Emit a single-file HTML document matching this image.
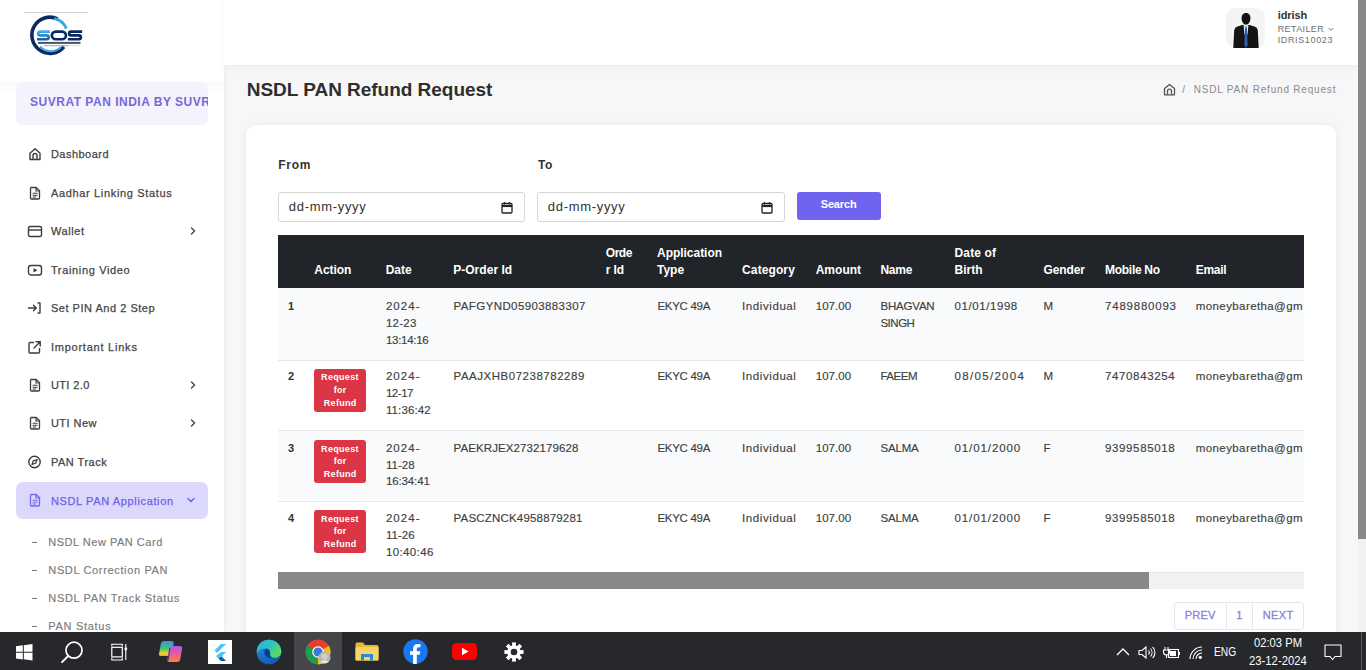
<!DOCTYPE html>
<html><head><meta charset="utf-8">
<style>
*{box-sizing:border-box;margin:0;padding:0}
html,body{width:1366px;height:670px;overflow:hidden;background:#f7f7f7;font-family:"Liberation Sans",sans-serif;position:relative}
.abs{position:absolute}
.t{position:absolute;white-space:nowrap}
svg{overflow:visible}
</style></head><body>
<div class="abs" style="left:224px;top:65px;width:1134px;height:567px;background:#f7f7f7"></div>
<div class="abs" style="left:0px;top:0px;width:224px;height:632px;background:#fff;box-shadow:1px 0 5px rgba(0,0,0,0.05)"></div>
<div class="abs" style="left:224px;top:0px;width:1134px;height:65px;background:#fff;box-shadow:0 2px 8px rgba(0,0,0,0.05)"></div>
<div class="abs" style="left:1358px;top:0px;width:8px;height:632px;background:#f1f1f1"></div>
<div class="abs" style="left:1358px;top:0px;width:8px;height:539px;background:#888"></div>
<div class="abs" style="left:24px;top:12px;width:64px;height:1px;background:#d0d0d0"></div>
<svg class="abs" style="left:0px;top:0px;" width="100" height="65" viewBox="0 0 100 65">
<defs><linearGradient id="sg" x1="0" y1="0" x2="0" y2="1"><stop offset="0" stop-color="#45b0ea"/><stop offset="1" stop-color="#1b5fa8"/></linearGradient></defs>
<path d="M57.6 18.8 A18.1 18.1 0 1 0 63.9 46.8" fill="none" stroke="#0c2a62" stroke-width="3.6"/>
<path d="M54 18.4 A17 17 0 0 1 66.3 28.6" fill="none" stroke="#36a4e2" stroke-width="2.8"/>
<path d="M40 46.5 A15 15 0 0 0 61 47.3" fill="none" stroke="#3fa9e4" stroke-width="2"/>
<path d="M50.00 31.55H40.27A1.92 1.92 0 0 0 40.27 35.40H46.73A1.92 1.92 0 0 1 46.73 39.25H37.00" fill="none" stroke="url(#sg)" stroke-width="2.7"/>
<rect x="51.85" y="31.55" width="14.1" height="7.7" rx="3.85" fill="none" stroke="#0c2a62" stroke-width="2.7"/>
<path d="M82.20 31.55H71.07A1.92 1.92 0 0 0 71.07 35.40H78.93A1.92 1.92 0 0 1 78.93 39.25H67.80" fill="none" stroke="#0c2a62" stroke-width="2.7"/>
<rect x="38" y="41.9" width="42.5" height="2" fill="#1e2b40" opacity="0.8"/>
<rect x="44" y="45" width="24" height="1.3" fill="#6d8fb0" opacity="0.6"/>
<rect x="68" y="45.3" width="12" height="0.7" fill="#9ab" opacity="0.5"/>
</svg>
<div class="abs" style="left:0px;top:81px;width:224px;height:16px;background:linear-gradient(rgba(0,0,0,0.025),rgba(0,0,0,0))"></div>
<div class="abs" style="left:16px;top:82px;width:192px;height:43px;background:#f4f3fd;border-radius:7px"></div>
<div class="abs" style="left:16px;top:82px;width:192px;height:43px;overflow:hidden;border-radius:6px">
<div class="t" style="left:14.00px;top:14.00px;font-size:12px;line-height:13.404px;color:#7369d8;font-weight:bold;letter-spacing:0.510px;">SUVRAT PAN INDIA BY SUVRAT DIGITAL</div>
</div>
<div class="t" style="left:50.90px;top:148.00px;font-size:11px;line-height:12.287px;color:#454545;letter-spacing:0.475px;-webkit-text-stroke:0.25px #454545;">Dashboard</div>
<svg class="abs" style="left:28px;top:147.2px;" width="14" height="14" viewBox="0 0 14 14"><path d="M2 12.5V6.2L7 1.8l5 4.4v6.3z" fill="none" stroke="#3d3d3d" stroke-width="1.4" stroke-linejoin="round"/><path d="M5 12.5V8.5a2 2 0 0 1 4 0v4" fill="none" stroke="#3d3d3d" stroke-width="1.4"/></svg>
<div class="t" style="left:50.90px;top:187.00px;font-size:11px;line-height:12.287px;color:#454545;letter-spacing:0.665px;-webkit-text-stroke:0.25px #454545;">Aadhar Linking Status</div>
<svg class="abs" style="left:28px;top:185.66px;" width="14" height="14" viewBox="0 0 14 14"><path d="M3 1.5h5.2l3.3 3.3v7.2a1 1 0 0 1-1 1H3.5a1 1 0 0 1-1-1V2.5a1 1 0 0 1 1-1z" fill="none" stroke="#3d3d3d" stroke-width="1.3" stroke-linejoin="round"/><path d="M8 1.5v3.5h3.5" fill="none" stroke="#3d3d3d" stroke-width="1.2"/><path d="M4.6 7.3h5M4.6 9.2h5M4.6 11h3.5" stroke="#3d3d3d" stroke-width="1.1"/></svg>
<div class="t" style="left:50.90px;top:225.00px;font-size:11px;line-height:12.287px;color:#454545;letter-spacing:0.620px;-webkit-text-stroke:0.25px #454545;">Wallet</div>
<svg class="abs" style="left:27px;top:224.12px;" width="16" height="14" viewBox="0 0 16 14"><rect x="1.5" y="2.5" width="13" height="10" rx="1.5" fill="none" stroke="#3d3d3d" stroke-width="1.4"/><path d="M1.5 6h13" stroke="#3d3d3d" stroke-width="1.4"/></svg>
<svg class="abs" style="left:188px;top:226.12px;" width="10" height="10" viewBox="0 0 10 10"><path d="M3.5 2l3 3-3 3" fill="none" stroke="#444" stroke-width="1.4" stroke-linecap="round"/></svg>
<div class="t" style="left:50.90px;top:264.00px;font-size:11px;line-height:12.287px;color:#454545;letter-spacing:0.654px;-webkit-text-stroke:0.25px #454545;">Training Video</div>
<svg class="abs" style="left:27px;top:262.58px;" width="16" height="14" viewBox="0 0 16 14"><rect x="1.5" y="2.5" width="13" height="9.5" rx="2.5" fill="none" stroke="#3d3d3d" stroke-width="1.4"/><path d="M6.5 5v4.5l4-2.25z" fill="#3d3d3d"/></svg>
<div class="t" style="left:50.90px;top:302.00px;font-size:11px;line-height:12.287px;color:#454545;letter-spacing:0.524px;-webkit-text-stroke:0.25px #454545;">Set PIN And 2 Step</div>
<svg class="abs" style="left:27px;top:301.03999999999996px;" width="16" height="14" viewBox="0 0 16 14"><path d="M1.5 7h7.5M6.5 4.2L9.3 7 6.5 9.8" fill="none" stroke="#3d3d3d" stroke-width="1.4" stroke-linecap="round" stroke-linejoin="round"/><path d="M10.5 2h2.5v10h-2.5" fill="none" stroke="#3d3d3d" stroke-width="1.4" stroke-linejoin="round"/></svg>
<div class="t" style="left:50.90px;top:341.00px;font-size:11px;line-height:12.287px;color:#454545;letter-spacing:0.771px;-webkit-text-stroke:0.25px #454545;">Important Links</div>
<svg class="abs" style="left:27px;top:339.5px;" width="16" height="14" viewBox="0 0 16 14"><path d="M7 2.5H3a1 1 0 0 0-1 1v8.5a1 1 0 0 0 1 1h8.5a1 1 0 0 0 1-1V8" fill="none" stroke="#3d3d3d" stroke-width="1.4"/><path d="M7 8l6-6M9 1.8h4.2V6" fill="none" stroke="#3d3d3d" stroke-width="1.4" stroke-linecap="round"/></svg>
<div class="t" style="left:50.90px;top:379.00px;font-size:11px;line-height:12.287px;color:#454545;letter-spacing:0.400px;-webkit-text-stroke:0.25px #454545;">UTI 2.0</div>
<svg class="abs" style="left:28px;top:377.96px;" width="14" height="14" viewBox="0 0 14 14"><path d="M3 1.5h5.2l3.3 3.3v7.2a1 1 0 0 1-1 1H3.5a1 1 0 0 1-1-1V2.5a1 1 0 0 1 1-1z" fill="none" stroke="#3d3d3d" stroke-width="1.3" stroke-linejoin="round"/><path d="M8 1.5v3.5h3.5" fill="none" stroke="#3d3d3d" stroke-width="1.2"/><path d="M4.6 7.3h5M4.6 9.2h5M4.6 11h3.5" stroke="#3d3d3d" stroke-width="1.1"/></svg>
<svg class="abs" style="left:188px;top:379.96px;" width="10" height="10" viewBox="0 0 10 10"><path d="M3.5 2l3 3-3 3" fill="none" stroke="#444" stroke-width="1.4" stroke-linecap="round"/></svg>
<div class="t" style="left:50.90px;top:417.00px;font-size:11px;line-height:12.287px;color:#454545;letter-spacing:0.467px;-webkit-text-stroke:0.25px #454545;">UTI New</div>
<svg class="abs" style="left:28px;top:416.42px;" width="14" height="14" viewBox="0 0 14 14"><path d="M3 1.5h5.2l3.3 3.3v7.2a1 1 0 0 1-1 1H3.5a1 1 0 0 1-1-1V2.5a1 1 0 0 1 1-1z" fill="none" stroke="#3d3d3d" stroke-width="1.3" stroke-linejoin="round"/><path d="M8 1.5v3.5h3.5" fill="none" stroke="#3d3d3d" stroke-width="1.2"/><path d="M4.6 7.3h5M4.6 9.2h5M4.6 11h3.5" stroke="#3d3d3d" stroke-width="1.1"/></svg>
<svg class="abs" style="left:188px;top:418.42px;" width="10" height="10" viewBox="0 0 10 10"><path d="M3.5 2l3 3-3 3" fill="none" stroke="#444" stroke-width="1.4" stroke-linecap="round"/></svg>
<div class="t" style="left:50.90px;top:456.00px;font-size:11px;line-height:12.287px;color:#454545;letter-spacing:0.513px;-webkit-text-stroke:0.25px #454545;">PAN Track</div>
<svg class="abs" style="left:27px;top:454.88px;" width="16" height="14" viewBox="0 0 16 14"><circle cx="7.5" cy="7" r="5.7" fill="none" stroke="#3d3d3d" stroke-width="1.4"/><path d="M10 4.5L8.7 8.2 5 9.5 6.3 5.8z" fill="none" stroke="#3d3d3d" stroke-width="1.3" stroke-linejoin="round"/></svg>
<div class="abs" style="left:16px;top:482px;width:192px;height:37px;background:#dcd8fc;border-radius:7px"></div>
<svg class="abs" style="left:28px;top:493px;" width="14" height="14" viewBox="0 0 14 14"><path d="M3 1.5h5.2l3.3 3.3v7.2a1 1 0 0 1-1 1H3.5a1 1 0 0 1-1-1V2.5a1 1 0 0 1 1-1z" fill="none" stroke="#7367f0" stroke-width="1.3" stroke-linejoin="round"/><path d="M8 1.5v3.5h3.5" fill="none" stroke="#7367f0" stroke-width="1.2"/><path d="M4.6 7.3h5M4.6 9.2h5M4.6 11h3.5" stroke="#7367f0" stroke-width="1.1"/></svg>
<div class="t" style="left:50.90px;top:495.00px;font-size:11px;line-height:12.287px;color:#6e62e6;letter-spacing:0.637px;-webkit-text-stroke:0.25px #6e62e6;">NSDL PAN Application</div>
<svg class="abs" style="left:186px;top:495px;" width="10" height="10" viewBox="0 0 10 10"><path d="M2 3.5l3 3 3-3" fill="none" stroke="#6e62e6" stroke-width="1.4" stroke-linecap="round"/></svg>
<div class="t" style="left:48.30px;top:536.00px;font-size:11px;line-height:12.287px;color:#7a7a7a;letter-spacing:0.513px;-webkit-text-stroke:0.15px #7a7a7a;">NSDL New PAN Card</div>
<div class="abs" style="left:32px;top:541.9px;width:5px;height:1.3px;background:#777"></div>
<div class="t" style="left:48.30px;top:564.00px;font-size:11px;line-height:12.287px;color:#7a7a7a;letter-spacing:0.644px;-webkit-text-stroke:0.15px #7a7a7a;">NSDL Correction PAN</div>
<div class="abs" style="left:32px;top:569.8px;width:5px;height:1.3px;background:#777"></div>
<div class="t" style="left:48.30px;top:592.00px;font-size:11px;line-height:12.287px;color:#7a7a7a;letter-spacing:0.650px;-webkit-text-stroke:0.15px #7a7a7a;">NSDL PAN Track Status</div>
<div class="abs" style="left:32px;top:597.6999999999999px;width:5px;height:1.3px;background:#777"></div>
<div class="t" style="left:48.30px;top:620.00px;font-size:11px;line-height:12.287px;color:#7a7a7a;letter-spacing:0.700px;-webkit-text-stroke:0.15px #7a7a7a;">PAN Status</div>
<div class="abs" style="left:32px;top:625.5999999999999px;width:5px;height:1.3px;background:#777"></div>
<div class="abs" style="left:1226px;top:8px;width:39px;height:40px;background:#f4f4f4;border-radius:9px"></div>
<svg class="abs" style="left:1233px;top:12px;" width="26" height="36" viewBox="0 0 26 36">
<path d="M13 1 C16 1 17.6 3.2 17.4 6.6 C17.2 9.8 15.8 12.6 13 12.8 C10.2 12.6 8.8 9.8 8.6 6.6 C8.4 3.2 10 1 13 1z" fill="#111"/>
<path d="M0.3 36 L1.2 18.2 Q1.6 15.2 4.5 14.4 L10.2 12.8 L13 15 L15.8 12.8 L21.5 14.4 Q24.4 15.2 24.8 18.2 L25.7 36z" fill="#151515"/>
<path d="M10.6 13.2 L13 15 L15.4 13.2 L14.6 22 L13 24 L11.4 22z" fill="#e6ecf5"/>
<path d="M12.1 15.2 L13.9 15.2 L14.7 33 L13 36 L11.3 33z" fill="#2e5bb5"/>
</svg>
<div class="t" style="left:1277.70px;top:9.00px;font-size:11px;line-height:12.287px;color:#333;font-weight:bold;letter-spacing:-0.060px;">idrish</div>
<div class="t" style="left:1277.70px;top:24.00px;font-size:9px;line-height:10.053px;color:#6f6f6f;letter-spacing:0.386px;">RETAILER</div>
<svg class="abs" style="left:1328px;top:27px;" width="6" height="5" viewBox="0 0 6 5"><path d="M0.6 1l2.3 2.3 2.3-2.3" fill="none" stroke="#777" stroke-width="1"/></svg>
<div class="t" style="left:1277.70px;top:35.00px;font-size:9px;line-height:10.053px;color:#6f6f6f;letter-spacing:0.633px;">IDRIS10023</div>
<div class="t" style="left:246.70px;top:79.00px;font-size:19px;line-height:21.223px;color:#2e2e2e;font-weight:bold;letter-spacing:-0.027px;">NSDL PAN Refund Request</div>
<svg class="abs" style="left:1163px;top:83px;" width="13" height="13" viewBox="0 0 13 13"><path d="M1.5 11.8V5.6L6.5 1.5l5 4.1v6.2z" fill="none" stroke="#555" stroke-width="1.3" stroke-linejoin="round"/><path d="M4.5 11.8V8.2a2 2 0 0 1 4 0v3.6" fill="none" stroke="#555" stroke-width="1.3"/></svg>
<div class="t" style="left:1182.20px;top:84.00px;font-size:10px;line-height:11.170px;color:#8a8a8a;letter-spacing:0.000px;">/</div>
<div class="t" style="left:1193.70px;top:84.00px;font-size:10px;line-height:11.170px;color:#8a8a8a;letter-spacing:0.809px;">NSDL PAN Refund Request</div>
<div class="abs" style="left:246px;top:125px;width:1090px;height:520px;background:#fff;border-radius:10px;box-shadow:0 0 8px rgba(0,0,0,0.06)"></div>
<div class="t" style="left:278.30px;top:159.00px;font-size:12px;line-height:13.404px;color:#333;font-weight:bold;letter-spacing:0.667px;">From</div>
<div class="t" style="left:537.90px;top:159.00px;font-size:12px;line-height:13.404px;color:#333;font-weight:bold;letter-spacing:0.600px;">To</div>
<div class="abs" style="left:278px;top:192px;width:247px;height:30px;background:#fff;border:1px solid #d6d6d6;border-radius:3px"></div>
<div class="t" style="left:288.80px;top:200.00px;font-size:13px;line-height:14.521px;color:#333;letter-spacing:0.689px;">dd-mm-yyyy</div>
<svg class="abs" style="left:501px;top:201px;" width="12" height="13" viewBox="0 0 12 13"><rect x="1" y="2.5" width="10" height="9.5" rx="1" fill="none" stroke="#222" stroke-width="1.3"/><path d="M1 5h10" stroke="#222" stroke-width="2.2"/><path d="M3.5 1v2.5M8.5 1v2.5" stroke="#222" stroke-width="1.2"/></svg>
<div class="abs" style="left:537px;top:192px;width:248px;height:30px;background:#fff;border:1px solid #d6d6d6;border-radius:3px"></div>
<div class="t" style="left:547.80px;top:200.00px;font-size:13px;line-height:14.521px;color:#333;letter-spacing:0.689px;">dd-mm-yyyy</div>
<svg class="abs" style="left:761px;top:201px;" width="12" height="13" viewBox="0 0 12 13"><rect x="1" y="2.5" width="10" height="9.5" rx="1" fill="none" stroke="#222" stroke-width="1.3"/><path d="M1 5h10" stroke="#222" stroke-width="2.2"/><path d="M3.5 1v2.5M8.5 1v2.5" stroke="#222" stroke-width="1.2"/></svg>
<div class="abs" style="left:797px;top:192px;width:84px;height:28px;background:#6f64f0;border-radius:3px"></div>
<div class="t" style="left:820.70px;top:198.00px;font-size:11px;line-height:12.287px;color:#fff;font-weight:bold;letter-spacing:-0.140px;">Search</div>
<div class="abs" style="left:278px;top:235px;width:1026px;height:53px;background:#212529"></div>
<div class="t" style="left:314.30px;top:264.00px;font-size:12px;line-height:13.404px;color:#fff;font-weight:bold;letter-spacing:-0.060px;">Action</div>
<div class="t" style="left:385.70px;top:264.00px;font-size:12px;line-height:13.404px;color:#fff;font-weight:bold;letter-spacing:0.000px;">Date</div>
<div class="t" style="left:453.20px;top:264.00px;font-size:12px;line-height:13.404px;color:#fff;font-weight:bold;letter-spacing:0.033px;">P-Order Id</div>
<div class="t" style="left:605.80px;top:247.00px;font-size:12px;line-height:13.404px;color:#fff;font-weight:bold;letter-spacing:-0.500px;">Orde</div>
<div class="t" style="left:605.80px;top:264.00px;font-size:12px;line-height:13.404px;color:#fff;font-weight:bold;letter-spacing:-0.167px;">r Id</div>
<div class="t" style="left:657.00px;top:247.00px;font-size:12px;line-height:13.404px;color:#fff;font-weight:bold;letter-spacing:-0.030px;">Application</div>
<div class="t" style="left:657.00px;top:264.00px;font-size:12px;line-height:13.404px;color:#fff;font-weight:bold;letter-spacing:0.000px;">Type</div>
<div class="t" style="left:742.10px;top:264.00px;font-size:12px;line-height:13.404px;color:#fff;font-weight:bold;letter-spacing:0.100px;">Category</div>
<div class="t" style="left:815.70px;top:264.00px;font-size:12px;line-height:13.404px;color:#fff;font-weight:bold;letter-spacing:0.020px;">Amount</div>
<div class="t" style="left:880.40px;top:264.00px;font-size:12px;line-height:13.404px;color:#fff;font-weight:bold;letter-spacing:-0.233px;">Name</div>
<div class="t" style="left:954.50px;top:247.00px;font-size:12px;line-height:13.404px;color:#fff;font-weight:bold;letter-spacing:0.150px;">Date of</div>
<div class="t" style="left:954.50px;top:264.00px;font-size:12px;line-height:13.404px;color:#fff;font-weight:bold;letter-spacing:0.000px;">Birth</div>
<div class="t" style="left:1043.60px;top:264.00px;font-size:12px;line-height:13.404px;color:#fff;font-weight:bold;letter-spacing:-0.140px;">Gender</div>
<div class="t" style="left:1105.10px;top:264.00px;font-size:12px;line-height:13.404px;color:#fff;font-weight:bold;letter-spacing:-0.300px;">Mobile No</div>
<div class="t" style="left:1195.80px;top:264.00px;font-size:12px;line-height:13.404px;color:#fff;font-weight:bold;letter-spacing:-0.300px;">Email</div>
<div class="abs" style="left:278px;top:288px;width:1026px;height:284px;overflow:hidden">
<div class="abs" style="left:0;top:0.0px;width:1026px;height:72.5px;background:#f9fafb"></div>
<div class="abs" style="left:0;top:72.5px;width:1026px;height:69.5px;background:#fff"></div>
<div class="abs" style="left:0;top:72.0px;width:1026px;height:1px;background:#e6e8eb"></div>
<div class="abs" style="left:0;top:142.0px;width:1026px;height:71.2px;background:#f9fafb"></div>
<div class="abs" style="left:0;top:141.5px;width:1026px;height:1px;background:#e6e8eb"></div>
<div class="abs" style="left:0;top:213.2px;width:1026px;height:70.5px;background:#fff"></div>
<div class="abs" style="left:0;top:212.7px;width:1026px;height:1px;background:#e6e8eb"></div>
<div class="t" style="left:10.00px;top:12.00px;font-size:11px;line-height:12.287px;color:#333;font-weight:bold;letter-spacing:0.000px;">1</div>
<div class="t" style="left:107.90px;top:12.00px;font-size:11.5px;line-height:12.845px;color:#3e3e3e;letter-spacing:1.050px;-webkit-text-stroke:0.15px #3e3e3e;">2024-</div>
<div class="t" style="left:107.90px;top:29.00px;font-size:11.5px;line-height:12.845px;color:#3e3e3e;letter-spacing:0.250px;-webkit-text-stroke:0.15px #3e3e3e;">12-23</div>
<div class="t" style="left:107.90px;top:46.00px;font-size:11.5px;line-height:12.845px;color:#3e3e3e;letter-spacing:-0.271px;-webkit-text-stroke:0.15px #3e3e3e;">13:14:16</div>
<div class="t" style="left:175.60px;top:12.00px;font-size:11.5px;line-height:12.845px;color:#3e3e3e;letter-spacing:0.394px;-webkit-text-stroke:0.15px #3e3e3e;">PAFGYND05903883307</div>
<div class="t" style="left:379.40px;top:12.00px;font-size:11.5px;line-height:12.845px;color:#3e3e3e;letter-spacing:-0.286px;-webkit-text-stroke:0.15px #3e3e3e;">EKYC 49A</div>
<div class="t" style="left:464.10px;top:12.00px;font-size:11.5px;line-height:12.845px;color:#3e3e3e;letter-spacing:0.578px;-webkit-text-stroke:0.15px #3e3e3e;">Individual</div>
<div class="t" style="left:537.70px;top:12.00px;font-size:11.5px;line-height:12.845px;color:#3e3e3e;letter-spacing:0.060px;-webkit-text-stroke:0.15px #3e3e3e;">107.00</div>
<div class="t" style="left:602.40px;top:12.00px;font-size:11.5px;line-height:12.845px;color:#3e3e3e;letter-spacing:-0.183px;-webkit-text-stroke:0.15px #3e3e3e;">BHAGVAN</div>
<div class="t" style="left:602.40px;top:29.00px;font-size:11.5px;line-height:12.845px;color:#3e3e3e;letter-spacing:-0.475px;-webkit-text-stroke:0.15px #3e3e3e;">SINGH</div>
<div class="t" style="left:676.50px;top:12.00px;font-size:11.5px;line-height:12.845px;color:#3e3e3e;letter-spacing:0.578px;-webkit-text-stroke:0.15px #3e3e3e;">01/01/1998</div>
<div class="t" style="left:765.60px;top:12.00px;font-size:11.5px;line-height:12.845px;color:#3e3e3e;letter-spacing:0.000px;-webkit-text-stroke:0.15px #3e3e3e;">M</div>
<div class="t" style="left:827.10px;top:12.00px;font-size:11.5px;line-height:12.845px;color:#3e3e3e;letter-spacing:0.767px;-webkit-text-stroke:0.15px #3e3e3e;">7489880093</div>
<div class="t" style="left:917.80px;top:12.00px;font-size:11.5px;line-height:12.845px;color:#3e3e3e;letter-spacing:0.400px;-webkit-text-stroke:0.15px #3e3e3e;">moneybaretha@gm</div>
<div class="t" style="left:10.00px;top:82.00px;font-size:11px;line-height:12.287px;color:#333;font-weight:bold;letter-spacing:0.000px;">2</div>
<div class="abs" style="left:36.3px;top:81.0px;width:51.5px;height:43px;background:#dc3545;border-radius:3px"></div>
<div class="t" style="left:43.05px;top:84.00px;font-size:9px;line-height:10.053px;color:#fff;font-weight:bold;letter-spacing:0.330px;">Request</div>
<div class="t" style="left:55.72px;top:97.00px;font-size:9px;line-height:10.053px;color:#fff;font-weight:bold;letter-spacing:0.330px;">for</div>
<div class="t" style="left:45.73px;top:110.00px;font-size:9px;line-height:10.053px;color:#fff;font-weight:bold;letter-spacing:0.330px;">Refund</div>
<div class="t" style="left:107.90px;top:82.00px;font-size:11.5px;line-height:12.845px;color:#3e3e3e;letter-spacing:1.050px;-webkit-text-stroke:0.15px #3e3e3e;">2024-</div>
<div class="t" style="left:107.90px;top:99.00px;font-size:11.5px;line-height:12.845px;color:#3e3e3e;letter-spacing:-0.450px;-webkit-text-stroke:0.15px #3e3e3e;">12-17</div>
<div class="t" style="left:107.90px;top:116.00px;font-size:11.5px;line-height:12.845px;color:#3e3e3e;letter-spacing:0.129px;-webkit-text-stroke:0.15px #3e3e3e;">11:36:42</div>
<div class="t" style="left:175.60px;top:82.00px;font-size:11.5px;line-height:12.845px;color:#3e3e3e;letter-spacing:0.518px;-webkit-text-stroke:0.15px #3e3e3e;">PAAJXHB07238782289</div>
<div class="t" style="left:379.40px;top:82.00px;font-size:11.5px;line-height:12.845px;color:#3e3e3e;letter-spacing:-0.286px;-webkit-text-stroke:0.15px #3e3e3e;">EKYC 49A</div>
<div class="t" style="left:464.10px;top:82.00px;font-size:11.5px;line-height:12.845px;color:#3e3e3e;letter-spacing:0.578px;-webkit-text-stroke:0.15px #3e3e3e;">Individual</div>
<div class="t" style="left:537.70px;top:82.00px;font-size:11.5px;line-height:12.845px;color:#3e3e3e;letter-spacing:0.060px;-webkit-text-stroke:0.15px #3e3e3e;">107.00</div>
<div class="t" style="left:602.40px;top:82.00px;font-size:11.5px;line-height:12.845px;color:#3e3e3e;letter-spacing:-0.450px;-webkit-text-stroke:0.15px #3e3e3e;">FAEEM</div>
<div class="t" style="left:676.50px;top:82.00px;font-size:11.5px;line-height:12.845px;color:#3e3e3e;letter-spacing:1.322px;-webkit-text-stroke:0.15px #3e3e3e;">08/05/2004</div>
<div class="t" style="left:765.60px;top:82.00px;font-size:11.5px;line-height:12.845px;color:#3e3e3e;letter-spacing:0.000px;-webkit-text-stroke:0.15px #3e3e3e;">M</div>
<div class="t" style="left:827.10px;top:82.00px;font-size:11.5px;line-height:12.845px;color:#3e3e3e;letter-spacing:0.611px;-webkit-text-stroke:0.15px #3e3e3e;">7470843254</div>
<div class="t" style="left:917.80px;top:82.00px;font-size:11.5px;line-height:12.845px;color:#3e3e3e;letter-spacing:0.400px;-webkit-text-stroke:0.15px #3e3e3e;">moneybaretha@gm</div>
<div class="t" style="left:10.00px;top:154.00px;font-size:11px;line-height:12.287px;color:#333;font-weight:bold;letter-spacing:0.000px;">3</div>
<div class="abs" style="left:36.3px;top:152.3px;width:51.5px;height:43px;background:#dc3545;border-radius:3px"></div>
<div class="t" style="left:43.05px;top:156.00px;font-size:9px;line-height:10.053px;color:#fff;font-weight:bold;letter-spacing:0.330px;">Request</div>
<div class="t" style="left:55.72px;top:168.00px;font-size:9px;line-height:10.053px;color:#fff;font-weight:bold;letter-spacing:0.330px;">for</div>
<div class="t" style="left:45.73px;top:181.00px;font-size:9px;line-height:10.053px;color:#fff;font-weight:bold;letter-spacing:0.330px;">Refund</div>
<div class="t" style="left:107.90px;top:154.00px;font-size:11.5px;line-height:12.845px;color:#3e3e3e;letter-spacing:1.050px;-webkit-text-stroke:0.15px #3e3e3e;">2024-</div>
<div class="t" style="left:107.90px;top:171.00px;font-size:11.5px;line-height:12.845px;color:#3e3e3e;letter-spacing:0.025px;-webkit-text-stroke:0.15px #3e3e3e;">11-28</div>
<div class="t" style="left:107.90px;top:187.00px;font-size:11.5px;line-height:12.845px;color:#3e3e3e;letter-spacing:-0.114px;-webkit-text-stroke:0.15px #3e3e3e;">16:34:41</div>
<div class="t" style="left:175.60px;top:154.00px;font-size:11.5px;line-height:12.845px;color:#3e3e3e;letter-spacing:0.094px;-webkit-text-stroke:0.15px #3e3e3e;">PAEKRJEX2732179628</div>
<div class="t" style="left:379.40px;top:154.00px;font-size:11.5px;line-height:12.845px;color:#3e3e3e;letter-spacing:-0.286px;-webkit-text-stroke:0.15px #3e3e3e;">EKYC 49A</div>
<div class="t" style="left:464.10px;top:154.00px;font-size:11.5px;line-height:12.845px;color:#3e3e3e;letter-spacing:0.578px;-webkit-text-stroke:0.15px #3e3e3e;">Individual</div>
<div class="t" style="left:537.70px;top:154.00px;font-size:11.5px;line-height:12.845px;color:#3e3e3e;letter-spacing:0.060px;-webkit-text-stroke:0.15px #3e3e3e;">107.00</div>
<div class="t" style="left:602.40px;top:154.00px;font-size:11.5px;line-height:12.845px;color:#3e3e3e;letter-spacing:-0.150px;-webkit-text-stroke:0.15px #3e3e3e;">SALMA</div>
<div class="t" style="left:676.50px;top:154.00px;font-size:11.5px;line-height:12.845px;color:#3e3e3e;letter-spacing:0.911px;-webkit-text-stroke:0.15px #3e3e3e;">01/01/2000</div>
<div class="t" style="left:765.60px;top:154.00px;font-size:11.5px;line-height:12.845px;color:#3e3e3e;letter-spacing:0.000px;-webkit-text-stroke:0.15px #3e3e3e;">F</div>
<div class="t" style="left:827.10px;top:154.00px;font-size:11.5px;line-height:12.845px;color:#3e3e3e;letter-spacing:0.611px;-webkit-text-stroke:0.15px #3e3e3e;">9399585018</div>
<div class="t" style="left:917.80px;top:154.00px;font-size:11.5px;line-height:12.845px;color:#3e3e3e;letter-spacing:0.400px;-webkit-text-stroke:0.15px #3e3e3e;">moneybaretha@gm</div>
<div class="t" style="left:10.00px;top:224.00px;font-size:11px;line-height:12.287px;color:#333;font-weight:bold;letter-spacing:0.000px;">4</div>
<div class="abs" style="left:36.3px;top:222.4px;width:51.5px;height:43px;background:#dc3545;border-radius:3px"></div>
<div class="t" style="left:43.05px;top:226.00px;font-size:9px;line-height:10.053px;color:#fff;font-weight:bold;letter-spacing:0.330px;">Request</div>
<div class="t" style="left:55.72px;top:238.00px;font-size:9px;line-height:10.053px;color:#fff;font-weight:bold;letter-spacing:0.330px;">for</div>
<div class="t" style="left:45.73px;top:251.00px;font-size:9px;line-height:10.053px;color:#fff;font-weight:bold;letter-spacing:0.330px;">Refund</div>
<div class="t" style="left:107.90px;top:224.00px;font-size:11.5px;line-height:12.845px;color:#3e3e3e;letter-spacing:1.050px;-webkit-text-stroke:0.15px #3e3e3e;">2024-</div>
<div class="t" style="left:107.90px;top:241.00px;font-size:11.5px;line-height:12.845px;color:#3e3e3e;letter-spacing:0.025px;-webkit-text-stroke:0.15px #3e3e3e;">11-26</div>
<div class="t" style="left:107.90px;top:258.00px;font-size:11.5px;line-height:12.845px;color:#3e3e3e;letter-spacing:0.386px;-webkit-text-stroke:0.15px #3e3e3e;">10:40:46</div>
<div class="t" style="left:175.60px;top:224.00px;font-size:11.5px;line-height:12.845px;color:#3e3e3e;letter-spacing:0.182px;-webkit-text-stroke:0.15px #3e3e3e;">PASCZNCK4958879281</div>
<div class="t" style="left:379.40px;top:224.00px;font-size:11.5px;line-height:12.845px;color:#3e3e3e;letter-spacing:-0.286px;-webkit-text-stroke:0.15px #3e3e3e;">EKYC 49A</div>
<div class="t" style="left:464.10px;top:224.00px;font-size:11.5px;line-height:12.845px;color:#3e3e3e;letter-spacing:0.578px;-webkit-text-stroke:0.15px #3e3e3e;">Individual</div>
<div class="t" style="left:537.70px;top:224.00px;font-size:11.5px;line-height:12.845px;color:#3e3e3e;letter-spacing:0.060px;-webkit-text-stroke:0.15px #3e3e3e;">107.00</div>
<div class="t" style="left:602.40px;top:224.00px;font-size:11.5px;line-height:12.845px;color:#3e3e3e;letter-spacing:-0.150px;-webkit-text-stroke:0.15px #3e3e3e;">SALMA</div>
<div class="t" style="left:676.50px;top:224.00px;font-size:11.5px;line-height:12.845px;color:#3e3e3e;letter-spacing:0.911px;-webkit-text-stroke:0.15px #3e3e3e;">01/01/2000</div>
<div class="t" style="left:765.60px;top:224.00px;font-size:11.5px;line-height:12.845px;color:#3e3e3e;letter-spacing:0.000px;-webkit-text-stroke:0.15px #3e3e3e;">F</div>
<div class="t" style="left:827.10px;top:224.00px;font-size:11.5px;line-height:12.845px;color:#3e3e3e;letter-spacing:0.611px;-webkit-text-stroke:0.15px #3e3e3e;">9399585018</div>
<div class="t" style="left:917.80px;top:224.00px;font-size:11.5px;line-height:12.845px;color:#3e3e3e;letter-spacing:0.400px;-webkit-text-stroke:0.15px #3e3e3e;">moneybaretha@gm</div>
</div>
<div class="abs" style="left:278px;top:571.7px;width:1026px;height:17px;background:#f1f1f1;border-top:1px solid #e6e6e6"></div>
<div class="abs" style="left:278px;top:571.7px;width:871px;height:17px;background:#888"></div>
<div class="abs" style="left:1174px;top:602px;width:130px;height:28px;border:1px solid #e3e5e8;border-radius:4px;background:#fff"></div>
<div class="abs" style="left:1226px;top:602px;width:1px;height:28px;background:#e3e5e8"></div>
<div class="abs" style="left:1252px;top:602px;width:1px;height:28px;background:#e3e5e8"></div>
<div class="t" style="left:1184.80px;top:609.00px;font-size:11px;line-height:12.287px;color:#8983d8;letter-spacing:0.200px;-webkit-text-stroke:0.3px #8983d8">PREV</div>
<div class="t" style="left:1236.30px;top:609.00px;font-size:11px;line-height:12.287px;color:#8983d8;letter-spacing:0.000px;-webkit-text-stroke:0.3px #8983d8">1</div>
<div class="t" style="left:1262.80px;top:609.00px;font-size:11px;line-height:12.287px;color:#8983d8;letter-spacing:0.333px;-webkit-text-stroke:0.3px #8983d8">NEXT</div>
<div class="abs" style="left:0px;top:632px;width:1366px;height:38px;background:#27282c"></div>
<div class="abs" style="left:294px;top:632px;width:48px;height:38px;background:#45464a"></div>
<svg class="abs" style="left:16px;top:644px;" width="17" height="17" viewBox="0 0 17 17"><path d="M0 2.3L6.8 1.3V7.8H0zM7.8 1.2L16.5 0V7.8H7.8zM0 8.8H6.8V15.4L0 14.4zM7.8 8.8H16.5V16.5L7.8 15.3z" fill="#fff"/></svg>
<svg class="abs" style="left:58px;top:639px;" width="28" height="26" viewBox="0 0 28 26"><circle cx="16" cy="11.2" r="8" fill="none" stroke="#fff" stroke-width="1.7"/><path d="M10.2 17L4 23.2" stroke="#fff" stroke-width="1.9" stroke-linecap="round"/></svg>
<svg class="abs" style="left:110px;top:643px;" width="20" height="19" viewBox="0 0 20 19"><path d="M1.8 3.2V1.3H12.3V3.2" fill="none" stroke="#fff" stroke-width="1.1"/><rect x="1.8" y="4.3" width="10.5" height="9.6" fill="none" stroke="#fff" stroke-width="1.2"/><path d="M1.8 15V17H12.3V15" fill="none" stroke="#fff" stroke-width="1.1"/><path d="M15.8 1V17" stroke="#fff" stroke-width="1.1"/><rect x="14.6" y="4.6" width="2.5" height="2.6" fill="#fff"/></svg>
<svg class="abs" style="left:156px;top:639px;" width="30" height="26" viewBox="0 0 30 26"><defs><linearGradient id="cp1" x1="0" y1="0" x2="0" y2="1"><stop offset="0" stop-color="#3d8ff4"/><stop offset="0.5" stop-color="#45c46c"/><stop offset="0.85" stop-color="#f4d12e"/><stop offset="1" stop-color="#f7963a"/></linearGradient>
<linearGradient id="cp2" x1="0" y1="0" x2="0" y2="1"><stop offset="0" stop-color="#a85be9"/><stop offset="0.5" stop-color="#ee5a9c"/><stop offset="1" stop-color="#fb823a"/></linearGradient></defs>
<path d="M8.5 2 H15.5 Q18 2 17.6 4.6 L16 14 Q15.5 17 12.6 17 H5.2 Q2.6 17 3.1 14.4 L4.8 5 Q5.4 2 8.5 2z" fill="url(#cp1)"/>
<path d="M15.8 7 H24 Q26.6 7 26.1 9.7 L24.4 19.8 Q23.9 23 20.9 23 H13.6 Q11 23 11.5 20.3 L13.2 10 Q13.8 7 15.8 7z" fill="url(#cp2)"/>
<path d="M13.9 8.8 L12.2 21" stroke="#2a2f7a" stroke-width="1.1" opacity="0.85"/></svg>
<div class="abs" style="left:207.6px;top:639.6px;width:24.6px;height:24.2px;background:#fff"></div>
<svg class="abs" style="left:210px;top:642px;" width="20" height="20" viewBox="0 0 20 20"><path d="M11 2h5L7 11 4.5 8.5z" fill="#47c5fb"/><path d="M11 10h5l-4.5 4.5 4.5 4.5h-5L8.5 16.5 6 14z" fill="#47c5fb"/><path d="M8.5 16.5L11 19h5l-4.5-4.5z" fill="#0b5fa5"/></svg>
<svg class="abs" style="left:256px;top:639px;" width="26" height="26" viewBox="0 0 26 26"><defs><linearGradient id="eg" x1="0" y1="0" x2="0.4" y2="1"><stop offset="0" stop-color="#2c9ae8"/><stop offset="1" stop-color="#115cb4"/></linearGradient>
<linearGradient id="eg2" x1="0" y1="0" x2="1" y2="0.6"><stop offset="0" stop-color="#2eb4e6"/><stop offset="0.55" stop-color="#2fc2c0"/><stop offset="1" stop-color="#5fdc55"/></linearGradient></defs>
<circle cx="13" cy="13" r="12.3" fill="url(#eg)"/>
<path d="M0.8 12 C1.5 4.5 7 0.7 13 0.7 C20 0.7 25.3 6 25.3 12.5 C25.3 16.5 22 18.8 18.2 18.8 C15.2 18.8 13.6 17 14 14.8 C14.5 12 13 9.6 9.8 9.6 C5.5 9.6 2.4 11.6 0.8 14z" fill="url(#eg2)"/>
<path d="M9.8 9.8 C13 9.8 14.4 12 14 14.8 C13.7 17 15.2 18.8 16.5 19 C14 19.5 9 18 8.5 14.5 C8.2 12 8.8 10.5 9.8 9.8z" fill="#0c3f86"/></svg>
<svg class="abs" style="left:305px;top:639px;" width="27" height="27" viewBox="0 0 27 27"><path d="M13 13 L2.17 6.75 A12.5 12.5 0 0 1 23.83 6.75Z" fill="#e0402f"/>
<path d="M13 13 L23.83 6.75 A12.5 12.5 0 0 1 13 25.5Z" fill="#f5bd23"/>
<path d="M13 13 L13 25.5 A12.5 12.5 0 0 1 2.17 6.75Z" fill="#1f9d4d"/>
<circle cx="13" cy="13" r="5.8" fill="#fff"/><circle cx="13" cy="13" r="4.6" fill="#3a78dc"/>
<circle cx="19.5" cy="18.5" r="6" fill="#b9b5b0"/><circle cx="19.5" cy="17.5" r="3" fill="#d4d0ca"/><path d="M15 22.5 Q19.5 19.5 24 22.5 A6 6 0 0 1 15 22.5z" fill="#e6e3de"/></svg>
<svg class="abs" style="left:355px;top:642px;" width="24" height="19" viewBox="0 0 24 19"><path d="M0.5 2a1.5 1.5 0 0 1 1.5-1.5h6l2 2.5h12a1.5 1.5 0 0 1 1.5 1.5V17a1.5 1.5 0 0 1-1.5 1.5H2A1.5 1.5 0 0 1 .5 17z" fill="#e8b738"/><rect x="0.5" y="5" width="23" height="13.5" rx="1" fill="#f8d368"/><path d="M6 18.5V12h12v6.5h-3v-3.5h-6v3.5z" fill="#2a8ad4"/></svg>
<svg class="abs" style="left:403px;top:639px;" width="25" height="25" viewBox="0 0 25 25"><circle cx="12.5" cy="12.5" r="12.2" fill="#1877f2"/><path d="M13.8 25V15.8h3l.5-3.5h-3.5V10c0-1 .4-1.7 1.8-1.7h1.9V5.2c-.4 0-1.5-.2-2.8-.2-2.8 0-4.6 1.7-4.6 4.7v2.6H7v3.5h3.1V25z" fill="#fff"/></svg>
<svg class="abs" style="left:452px;top:643px;" width="25" height="17" viewBox="0 0 25 17"><rect x="0" y="0" width="25" height="17" rx="4.5" fill="#f00"/><path d="M10 4.8v7.4l6.5-3.7z" fill="#fff"/></svg>
<svg class="abs" style="left:504px;top:642px;" width="20" height="20" viewBox="0 0 20 20"><g transform="translate(10,10)" fill="#fff"><rect x="-1.9" y="-9.6" width="3.8" height="5" transform="rotate(0)"/><rect x="-1.9" y="-9.6" width="3.8" height="5" transform="rotate(45)"/><rect x="-1.9" y="-9.6" width="3.8" height="5" transform="rotate(90)"/><rect x="-1.9" y="-9.6" width="3.8" height="5" transform="rotate(135)"/><rect x="-1.9" y="-9.6" width="3.8" height="5" transform="rotate(180)"/><rect x="-1.9" y="-9.6" width="3.8" height="5" transform="rotate(225)"/><rect x="-1.9" y="-9.6" width="3.8" height="5" transform="rotate(270)"/><rect x="-1.9" y="-9.6" width="3.8" height="5" transform="rotate(315)"/><circle r="6.8"/></g><circle cx="10" cy="10" r="3.3" fill="#27282c"/></svg>
<svg class="abs" style="left:1116px;top:648px;" width="14" height="8" viewBox="0 0 14 8"><path d="M1 7l6-6 6 6" fill="none" stroke="#fff" stroke-width="1.3"/></svg>
<svg class="abs" style="left:1138px;top:646px;" width="18" height="13" viewBox="0 0 18 13"><path d="M1 4.5h3L8 1v11L4 8.5H1z" fill="none" stroke="#fff" stroke-width="1.1"/><path d="M10.5 4.5a3 3 0 0 1 0 4M12.5 2.5a6 6 0 0 1 0 8M14.7 0.8a8.5 8.5 0 0 1 0 11.4" fill="none" stroke="#fff" stroke-width="1.1"/></svg>
<svg class="abs" style="left:1163px;top:646px;" width="17" height="13" viewBox="0 0 17 13"><path d="M2 1v3M5 1v3M0.5 4h6v2a3 3 0 0 1-6 0z" fill="none" stroke="#fff" stroke-width="1.1"/><path d="M3.5 9v3" stroke="#fff" stroke-width="1.1"/><rect x="5.5" y="3.5" width="10" height="8" fill="none" stroke="#fff" stroke-width="1.1"/><rect x="7" y="5" width="6" height="5" fill="#fff"/><rect x="15.5" y="6" width="1.5" height="3" fill="#fff"/></svg>
<svg class="abs" style="left:1189px;top:646px;" width="14" height="14" viewBox="0 0 14 14"><path d="M1 13A12 12 0 0 1 13 1M4 13A9 9 0 0 1 13 4M7 13A6 6 0 0 1 13 7" fill="none" stroke="#fff" stroke-width="1.1"/><circle cx="11.3" cy="11.3" r="1.6" fill="#fff"/></svg>
<div class="t" style="left:1213.50px;top:646px;font-size:12px;line-height:13.404px;color:#fff;transform:scaleX(0.8538);transform-origin:0 0">ENG</div>
<div class="t" style="left:1253.80px;top:637px;font-size:12px;line-height:13.404px;color:#fff;transform:scaleX(0.9339);transform-origin:0 0">02:03 PM</div>
<div class="t" style="left:1249.00px;top:655px;font-size:12px;line-height:13.404px;color:#fff;transform:scaleX(0.9414);transform-origin:0 0">23-12-2024</div>
<svg class="abs" style="left:1324px;top:644px;" width="18" height="17" viewBox="0 0 18 17"><path d="M1 1h16v11.5H11l-2.5 3-2.5-3H1z" fill="none" stroke="#fff" stroke-width="1.1" stroke-linejoin="round"/></svg>
<div class="abs" style="left:1361px;top:632px;width:1px;height:38px;background:#5a5a5a"></div>
</body></html>
